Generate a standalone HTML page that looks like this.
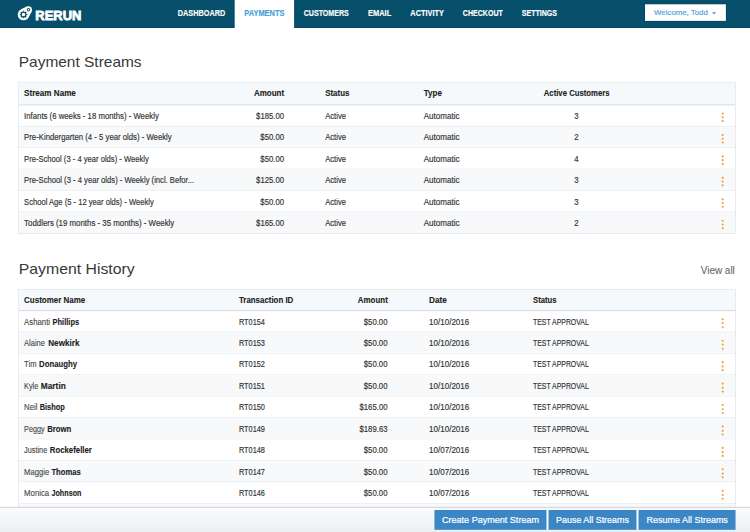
<!DOCTYPE html>
<html>
<head>
<meta charset="utf-8">
<title>Rerun - Payments</title>
<style>
html,body{margin:0;padding:0;width:750px;height:532px;overflow:hidden;background:#fff;}
body{font-family:"Liberation Sans",sans-serif;color:#333;}
#page{position:absolute;left:0;top:0;width:1400px;height:994px;transform:scale(0.535714);transform-origin:0 0;overflow:hidden;background:#fff;}
#page>*{position:absolute;}
.t{white-space:nowrap;color:#333;transform-origin:0 50%;-webkit-text-stroke:0.3px #333;}
.b{font-weight:bold;color:#222;-webkit-text-stroke:0.2px #222;}
#nav{left:0;top:0;width:1400px;background:#07506b;border-bottom:2px solid #04415f;box-sizing:border-box;}
.logo{left:26.13px;top:3.73px;width:44.8px;height:41.07px;}
.brand{color:#fff;-webkit-text-stroke:1.5px #fff;}
#tab{top:0;background:#fff;}
.te{top:0;background:#04456a;}
.nv{color:#fff;-webkit-text-stroke:0.3px #fff;}
.nv.on{color:#4a9fdc;-webkit-text-stroke:0.3px #4a9fdc;}
#user{background:#fff;box-shadow:0 0 0 1.5px #05445f;}
.usr{color:#4a9fdc;-webkit-text-stroke:0.3px #4a9fdc;}
#caret{width:0;height:0;border-left:4px solid transparent;border-right:4px solid transparent;border-top:4px solid #4a9fdc;}
.h{color:#383838;-webkit-text-stroke:0;}
.va{color:#6a6a72;-webkit-text-stroke:0.2px #6a6a72;}
.tbl{border:1px solid #dfe3e7;box-sizing:border-box;background:#e6e9ec;}
.hd{background:#f6f9fb;border-bottom:2px solid #d4d8dc;}
.rw{background:#fff;}
.rw.alt{background:#f7f9fb;}
.fn{color:#444;-webkit-text-stroke:0.2px #444;}
.dots{width:4px;}
.dots i{display:block;width:4px;height:4px;border-radius:50%;background:#f0a22e;margin-bottom:3.1px;}
#foot{left:0;width:1400px;border-top:2px solid #cfd5db;background:linear-gradient(#fafbfc,#eceff1);box-sizing:border-box;}
.btn{background:#3b86c4;}
.bt{color:#fff;-webkit-text-stroke:0.4px #fff;}
</style>
</head>
<body>
<div id="page">
<div id="nav" style="height:52.27px"></div>
<svg class="logo" viewBox="14 2 24 22">
<g fill="#fff"><path d="M28.76,17.04 L31.71,11.29 L26.96,6.40 L21.12,9.16 Z"/><circle cx="23.6" cy="14.4" r="5.8"/><circle cx="28.5" cy="9.65" r="3.6"/></g>
<g fill="#07506b"><circle cx="23.6" cy="14.4" r="2.8"/><rect x="22.90" y="10.65" width="1.4" height="7.5" transform="rotate(0 23.6 14.4)"/><rect x="22.90" y="10.65" width="1.4" height="7.5" transform="rotate(45 23.6 14.4)"/><rect x="22.90" y="10.65" width="1.4" height="7.5" transform="rotate(90 23.6 14.4)"/><rect x="22.90" y="10.65" width="1.4" height="7.5" transform="rotate(135 23.6 14.4)"/><circle cx="28.5" cy="9.65" r="1.7"/></g>
<g fill="#fff"><circle cx="23.6" cy="14.4" r="1.75"/><circle cx="28.5" cy="9.65" r="0.8"/></g>
</svg>
<span class="t b brand" style="left:66.08px;top:13.77px;font-size:24px;line-height:29px;transform:scaleX(1.008);">RERUN</span>
<div class="te" style="left:436.48px;width:113.13px;height:52.27px"></div>
<div id="tab" style="left:438.48px;width:110.13px;height:52.87px"></div>
<span class="t b nv" style="left:331.89px;top:13.59px;font-size:16.5px;line-height:20px;transform:scaleX(0.823);">DASHBOARD</span>
<span class="t b nv on" style="left:456.4px;top:13.59px;font-size:16.5px;line-height:20px;transform:scaleX(0.844);">PAYMENTS</span>
<span class="t b nv" style="left:567.47px;top:13.59px;font-size:16.5px;line-height:20px;transform:scaleX(0.799);">CUSTOMERS</span>
<span class="t b nv" style="left:687.31px;top:13.59px;font-size:16.5px;line-height:20px;transform:scaleX(0.844);">EMAIL</span>
<span class="t b nv" style="left:766.08px;top:13.59px;font-size:16.5px;line-height:20px;transform:scaleX(0.832);">ACTIVITY</span>
<span class="t b nv" style="left:864.08px;top:13.59px;font-size:16.5px;line-height:20px;transform:scaleX(0.797);">CHECKOUT</span>
<span class="t b nv" style="left:974.21px;top:13.59px;font-size:16.5px;line-height:20px;transform:scaleX(0.796);">SETTINGS</span>
<div id="user" style="left:1203.81px;top:7.84px;width:151.39px;height:30.89px"></div>
<span class="t usr" style="left:1220.8px;top:14.36px;font-size:15px;line-height:18px;transform:scaleX(0.975);">Welcome, Todd</span>
<i id="caret" style="left:1329.07px;top:22.77px"></i>
<span class="t h" style="left:35.09px;top:97.89px;font-size:29px;line-height:35px;transform:scaleX(0.995);">Payment Streams</span>
<span class="t h" style="left:35.09px;top:483.54px;font-size:29px;line-height:35px;transform:scaleX(1.017);">Payment History</span>
<span class="t va" style="left:1308.35px;top:492.82px;font-size:19px;line-height:23px;transform:scaleX(0.977);">View all</span>
<div class="tbl" style="left:33.97px;top:153.13px;width:1338.59px;height:283.02px"></div>
<div class="hd" style="left:34.97px;top:154.13px;width:1336.59px;height:40.5px"></div>
<div class="rw" style="left:34.97px;top:196.63px;width:1336.59px;height:38px"></div>
<div class="rw alt" style="left:34.97px;top:235.63px;width:1336.59px;height:39px"></div>
<div class="rw" style="left:34.97px;top:275.63px;width:1336.59px;height:39px"></div>
<div class="rw alt" style="left:34.97px;top:315.63px;width:1336.59px;height:39px"></div>
<div class="rw" style="left:34.97px;top:355.64px;width:1336.59px;height:39px"></div>
<div class="rw alt" style="left:34.97px;top:395.64px;width:1336.59px;height:39px"></div>
<span class="t b" style="left:44.61px;top:164.9px;font-size:16px;line-height:19px;transform:scaleX(0.944);">Stream Name</span>
<span class="t b" style="left:473.95px;top:164.9px;font-size:16px;line-height:19px;transform:scaleX(0.933);">Amount</span>
<span class="t b" style="left:606.67px;top:164.9px;font-size:16px;line-height:19px;transform:scaleX(0.924);">Status</span>
<span class="t b" style="left:791.47px;top:164.9px;font-size:16px;line-height:19px;transform:scaleX(0.940);">Type</span>
<span class="t b" style="left:1015.09px;top:164.9px;font-size:16px;line-height:19px;transform:scaleX(0.903);">Active Customers</span>
<span class="t" style="left:44.61px;top:206.72px;font-size:16px;line-height:19px;transform:scaleX(0.907);">Infants (6 weeks - 18 months) - Weekly</span>
<span class="t" style="left:477.91px;top:206.72px;font-size:16px;line-height:19px;transform:scaleX(0.906);">$185.00</span>
<span class="t" style="left:606.67px;top:206.72px;font-size:16px;line-height:19px;transform:scaleX(0.891);">Active</span>
<span class="t" style="left:791.47px;top:206.72px;font-size:16px;line-height:19px;transform:scaleX(0.939);">Automatic</span>
<span class="t" style="left:1072.47px;top:206.72px;font-size:16px;line-height:19px;transform:scaleX(0.906);">3</span>
<span class="dots" style="left:1346.67px;top:210.05px"><i></i><i></i><i></i></span>
<span class="t" style="left:44.61px;top:246.72px;font-size:16px;line-height:19px;transform:scaleX(0.904);">Pre-Kindergarten (4 - 5 year olds) - Weekly</span>
<span class="t" style="left:485.97px;top:246.72px;font-size:16px;line-height:19px;transform:scaleX(0.906);">$50.00</span>
<span class="t" style="left:606.67px;top:246.72px;font-size:16px;line-height:19px;transform:scaleX(0.891);">Active</span>
<span class="t" style="left:791.47px;top:246.72px;font-size:16px;line-height:19px;transform:scaleX(0.939);">Automatic</span>
<span class="t" style="left:1072.47px;top:246.72px;font-size:16px;line-height:19px;transform:scaleX(0.906);">2</span>
<span class="dots" style="left:1346.67px;top:250.06px"><i></i><i></i><i></i></span>
<span class="t" style="left:44.61px;top:286.72px;font-size:16px;line-height:19px;transform:scaleX(0.888);">Pre-School (3 - 4 year olds) - Weekly</span>
<span class="t" style="left:485.97px;top:286.72px;font-size:16px;line-height:19px;transform:scaleX(0.906);">$50.00</span>
<span class="t" style="left:606.67px;top:286.72px;font-size:16px;line-height:19px;transform:scaleX(0.891);">Active</span>
<span class="t" style="left:791.47px;top:286.72px;font-size:16px;line-height:19px;transform:scaleX(0.939);">Automatic</span>
<span class="t" style="left:1072.47px;top:286.72px;font-size:16px;line-height:19px;transform:scaleX(0.906);">4</span>
<span class="dots" style="left:1346.67px;top:290.06px"><i></i><i></i><i></i></span>
<span class="t" style="left:44.61px;top:326.72px;font-size:16px;line-height:19px;transform:scaleX(0.893);">Pre-School (3 - 4 year olds) - Weekly (incl. Befor...</span>
<span class="t" style="left:477.91px;top:326.72px;font-size:16px;line-height:19px;transform:scaleX(0.906);">$125.00</span>
<span class="t" style="left:606.67px;top:326.72px;font-size:16px;line-height:19px;transform:scaleX(0.891);">Active</span>
<span class="t" style="left:791.47px;top:326.72px;font-size:16px;line-height:19px;transform:scaleX(0.939);">Automatic</span>
<span class="t" style="left:1072.47px;top:326.72px;font-size:16px;line-height:19px;transform:scaleX(0.906);">3</span>
<span class="dots" style="left:1346.67px;top:330.06px"><i></i><i></i><i></i></span>
<span class="t" style="left:44.61px;top:366.73px;font-size:16px;line-height:19px;transform:scaleX(0.887);">School Age (5 - 12 year olds) - Weekly</span>
<span class="t" style="left:485.97px;top:366.73px;font-size:16px;line-height:19px;transform:scaleX(0.906);">$50.00</span>
<span class="t" style="left:606.67px;top:366.73px;font-size:16px;line-height:19px;transform:scaleX(0.891);">Active</span>
<span class="t" style="left:791.47px;top:366.73px;font-size:16px;line-height:19px;transform:scaleX(0.939);">Automatic</span>
<span class="t" style="left:1072.47px;top:366.73px;font-size:16px;line-height:19px;transform:scaleX(0.906);">3</span>
<span class="dots" style="left:1346.67px;top:370.06px"><i></i><i></i><i></i></span>
<span class="t" style="left:44.61px;top:406.73px;font-size:16px;line-height:19px;transform:scaleX(0.917);">Toddlers (19 months - 35 months) - Weekly</span>
<span class="t" style="left:477.91px;top:406.73px;font-size:16px;line-height:19px;transform:scaleX(0.906);">$165.00</span>
<span class="t" style="left:606.67px;top:406.73px;font-size:16px;line-height:19px;transform:scaleX(0.891);">Active</span>
<span class="t" style="left:791.47px;top:406.73px;font-size:16px;line-height:19px;transform:scaleX(0.939);">Automatic</span>
<span class="t" style="left:1072.47px;top:406.73px;font-size:16px;line-height:19px;transform:scaleX(0.906);">2</span>
<span class="dots" style="left:1346.67px;top:410.07px"><i></i><i></i><i></i></span>
<div class="tbl" style="left:33.97px;top:539.53px;width:1338.59px;height:440.97px"></div>
<div class="hd" style="left:34.97px;top:540.53px;width:1336.59px;height:38.45px"></div>
<div class="rw" style="left:34.97px;top:580.97px;width:1336.59px;height:38px"></div>
<div class="rw alt" style="left:34.97px;top:619.98px;width:1336.59px;height:39px"></div>
<div class="rw" style="left:34.97px;top:659.98px;width:1336.59px;height:39px"></div>
<div class="rw alt" style="left:34.97px;top:699.98px;width:1336.59px;height:39px"></div>
<div class="rw" style="left:34.97px;top:739.98px;width:1336.59px;height:39px"></div>
<div class="rw alt" style="left:34.97px;top:779.99px;width:1336.59px;height:39px"></div>
<div class="rw" style="left:34.97px;top:819.99px;width:1336.59px;height:39px"></div>
<div class="rw alt" style="left:34.97px;top:859.99px;width:1336.59px;height:39px"></div>
<div class="rw" style="left:34.97px;top:899.99px;width:1336.59px;height:39px"></div>
<div class="rw alt" style="left:34.97px;top:940px;width:1336.59px;height:39px"></div>
<span class="t b" style="left:44.61px;top:550.18px;font-size:16px;line-height:19px;transform:scaleX(0.930);">Customer Name</span>
<span class="t b" style="left:446.32px;top:550.18px;font-size:16px;line-height:19px;transform:scaleX(0.921);">Transaction ID</span>
<span class="t b" style="left:667.71px;top:550.18px;font-size:16px;line-height:19px;transform:scaleX(0.924);">Amount</span>
<span class="t b" style="left:800.99px;top:550.18px;font-size:16px;line-height:19px;transform:scaleX(0.958);">Date</span>
<span class="t b" style="left:994.56px;top:550.18px;font-size:16px;line-height:19px;transform:scaleX(0.897);">Status</span>
<span class="t fn" style="left:44.61px;top:590.69px;font-size:16px;line-height:19px;transform:scaleX(0.906);">Ashanti</span>
<span class="t b" style="left:98.37px;top:590.69px;font-size:16px;line-height:19px;transform:scaleX(0.873);">Phillips</span>
<span class="t" style="left:446.32px;top:590.69px;font-size:16px;line-height:19px;transform:scaleX(0.857);">RT0154</span>
<span class="t" style="left:679.17px;top:590.69px;font-size:16px;line-height:19px;transform:scaleX(0.906);">$50.00</span>
<span class="t" style="left:800.99px;top:590.69px;font-size:16px;line-height:19px;transform:scaleX(0.935);">10/10/2016</span>
<span class="t" style="left:994.56px;top:590.69px;font-size:16px;line-height:19px;transform:scaleX(0.805);">TEST APPROVAL</span>
<span class="dots" style="left:1346.67px;top:594.4px"><i></i><i></i><i></i></span>
<span class="t fn" style="left:44.61px;top:630.69px;font-size:16px;line-height:19px;transform:scaleX(0.873);">Alaine</span>
<span class="t b" style="left:89.6px;top:630.69px;font-size:16px;line-height:19px;transform:scaleX(0.952);">Newkirk</span>
<span class="t" style="left:446.32px;top:630.69px;font-size:16px;line-height:19px;transform:scaleX(0.857);">RT0153</span>
<span class="t" style="left:679.17px;top:630.69px;font-size:16px;line-height:19px;transform:scaleX(0.906);">$50.00</span>
<span class="t" style="left:800.99px;top:630.69px;font-size:16px;line-height:19px;transform:scaleX(0.935);">10/10/2016</span>
<span class="t" style="left:994.56px;top:630.69px;font-size:16px;line-height:19px;transform:scaleX(0.805);">TEST APPROVAL</span>
<span class="dots" style="left:1346.67px;top:634.4px"><i></i><i></i><i></i></span>
<span class="t fn" style="left:44.61px;top:670.69px;font-size:16px;line-height:19px;transform:scaleX(0.888);">Tim</span>
<span class="t b" style="left:73.17px;top:670.69px;font-size:16px;line-height:19px;transform:scaleX(0.907);">Donaughy</span>
<span class="t" style="left:446.32px;top:670.69px;font-size:16px;line-height:19px;transform:scaleX(0.857);">RT0152</span>
<span class="t" style="left:679.17px;top:670.69px;font-size:16px;line-height:19px;transform:scaleX(0.906);">$50.00</span>
<span class="t" style="left:800.99px;top:670.69px;font-size:16px;line-height:19px;transform:scaleX(0.935);">10/10/2016</span>
<span class="t" style="left:994.56px;top:670.69px;font-size:16px;line-height:19px;transform:scaleX(0.805);">TEST APPROVAL</span>
<span class="dots" style="left:1346.67px;top:674.41px"><i></i><i></i><i></i></span>
<span class="t fn" style="left:44.61px;top:710.7px;font-size:16px;line-height:19px;transform:scaleX(0.846);">Kyle</span>
<span class="t b" style="left:76.16px;top:710.7px;font-size:16px;line-height:19px;transform:scaleX(0.976);">Martin</span>
<span class="t" style="left:446.32px;top:710.7px;font-size:16px;line-height:19px;transform:scaleX(0.857);">RT0151</span>
<span class="t" style="left:679.17px;top:710.7px;font-size:16px;line-height:19px;transform:scaleX(0.906);">$50.00</span>
<span class="t" style="left:800.99px;top:710.7px;font-size:16px;line-height:19px;transform:scaleX(0.935);">10/10/2016</span>
<span class="t" style="left:994.56px;top:710.7px;font-size:16px;line-height:19px;transform:scaleX(0.805);">TEST APPROVAL</span>
<span class="dots" style="left:1346.67px;top:714.41px"><i></i><i></i><i></i></span>
<span class="t fn" style="left:44.61px;top:750.7px;font-size:16px;line-height:19px;transform:scaleX(0.901);">Neil</span>
<span class="t b" style="left:74.11px;top:750.7px;font-size:16px;line-height:19px;transform:scaleX(0.868);">Bishop</span>
<span class="t" style="left:446.32px;top:750.7px;font-size:16px;line-height:19px;transform:scaleX(0.857);">RT0150</span>
<span class="t" style="left:671.11px;top:750.7px;font-size:16px;line-height:19px;transform:scaleX(0.906);">$165.00</span>
<span class="t" style="left:800.99px;top:750.7px;font-size:16px;line-height:19px;transform:scaleX(0.935);">10/10/2016</span>
<span class="t" style="left:994.56px;top:750.7px;font-size:16px;line-height:19px;transform:scaleX(0.805);">TEST APPROVAL</span>
<span class="dots" style="left:1346.67px;top:754.41px"><i></i><i></i><i></i></span>
<span class="t fn" style="left:44.61px;top:790.7px;font-size:16px;line-height:19px;transform:scaleX(0.848);">Peggy</span>
<span class="t b" style="left:87.55px;top:790.7px;font-size:16px;line-height:19px;transform:scaleX(0.908);">Brown</span>
<span class="t" style="left:446.32px;top:790.7px;font-size:16px;line-height:19px;transform:scaleX(0.857);">RT0149</span>
<span class="t" style="left:671.11px;top:790.7px;font-size:16px;line-height:19px;transform:scaleX(0.906);">$189.63</span>
<span class="t" style="left:800.99px;top:790.7px;font-size:16px;line-height:19px;transform:scaleX(0.935);">10/10/2016</span>
<span class="t" style="left:994.56px;top:790.7px;font-size:16px;line-height:19px;transform:scaleX(0.805);">TEST APPROVAL</span>
<span class="dots" style="left:1346.67px;top:794.41px"><i></i><i></i><i></i></span>
<span class="t fn" style="left:44.61px;top:830.71px;font-size:16px;line-height:19px;transform:scaleX(0.851);">Justine</span>
<span class="t b" style="left:92.59px;top:830.71px;font-size:16px;line-height:19px;transform:scaleX(0.909);">Rockefeller</span>
<span class="t" style="left:446.32px;top:830.71px;font-size:16px;line-height:19px;transform:scaleX(0.857);">RT0148</span>
<span class="t" style="left:679.17px;top:830.71px;font-size:16px;line-height:19px;transform:scaleX(0.906);">$50.00</span>
<span class="t" style="left:800.99px;top:830.71px;font-size:16px;line-height:19px;transform:scaleX(0.935);">10/07/2016</span>
<span class="t" style="left:994.56px;top:830.71px;font-size:16px;line-height:19px;transform:scaleX(0.805);">TEST APPROVAL</span>
<span class="dots" style="left:1346.67px;top:834.42px"><i></i><i></i><i></i></span>
<span class="t fn" style="left:44.61px;top:870.71px;font-size:16px;line-height:19px;transform:scaleX(0.893);">Maggie</span>
<span class="t b" style="left:96.13px;top:870.71px;font-size:16px;line-height:19px;transform:scaleX(0.889);">Thomas</span>
<span class="t" style="left:446.32px;top:870.71px;font-size:16px;line-height:19px;transform:scaleX(0.857);">RT0147</span>
<span class="t" style="left:679.17px;top:870.71px;font-size:16px;line-height:19px;transform:scaleX(0.906);">$50.00</span>
<span class="t" style="left:800.99px;top:870.71px;font-size:16px;line-height:19px;transform:scaleX(0.935);">10/07/2016</span>
<span class="t" style="left:994.56px;top:870.71px;font-size:16px;line-height:19px;transform:scaleX(0.805);">TEST APPROVAL</span>
<span class="dots" style="left:1346.67px;top:874.42px"><i></i><i></i><i></i></span>
<span class="t fn" style="left:44.61px;top:910.71px;font-size:16px;line-height:19px;transform:scaleX(0.908);">Monica</span>
<span class="t b" style="left:96.13px;top:910.71px;font-size:16px;line-height:19px;transform:scaleX(0.840);">Johnson</span>
<span class="t" style="left:446.32px;top:910.71px;font-size:16px;line-height:19px;transform:scaleX(0.857);">RT0146</span>
<span class="t" style="left:679.17px;top:910.71px;font-size:16px;line-height:19px;transform:scaleX(0.906);">$50.00</span>
<span class="t" style="left:800.99px;top:910.71px;font-size:16px;line-height:19px;transform:scaleX(0.935);">10/07/2016</span>
<span class="t" style="left:994.56px;top:910.71px;font-size:16px;line-height:19px;transform:scaleX(0.805);">TEST APPROVAL</span>
<span class="dots" style="left:1346.67px;top:914.42px"><i></i><i></i><i></i></span>
<span class="t fn" style="left:44.61px;top:950.71px;font-size:16px;line-height:19px;transform:scaleX(0.917);">Laura</span>
<span class="t b" style="left:86.8px;top:950.71px;font-size:16px;line-height:19px;transform:scaleX(0.897);">Stevens</span>
<span class="t" style="left:446.32px;top:950.71px;font-size:16px;line-height:19px;transform:scaleX(0.857);">RT0145</span>
<span class="t" style="left:679.17px;top:950.71px;font-size:16px;line-height:19px;transform:scaleX(0.906);">$50.00</span>
<span class="t" style="left:800.99px;top:950.71px;font-size:16px;line-height:19px;transform:scaleX(0.935);">10/07/2016</span>
<span class="t" style="left:994.56px;top:950.71px;font-size:16px;line-height:19px;transform:scaleX(0.805);">TEST APPROVAL</span>
<span class="dots" style="left:1346.67px;top:954.42px"><i></i><i></i><i></i></span>
<div id="foot" style="top:945.65px;height:48.35px"></div>
<div class="btn" style="left:811.44px;top:951.81px;width:208.32px;height:36.77px"></div>
<span class="t bt" style="left:825.07px;top:959.59px;font-size:18px;line-height:22px;transform:scaleX(0.938);">Create Payment Stream</span>
<div class="btn" style="left:1024.05px;top:951.81px;width:163.89px;height:36.77px"></div>
<span class="t bt" style="left:1038.24px;top:959.59px;font-size:18px;line-height:22px;transform:scaleX(0.924);">Pause All Streams</span>
<div class="btn" style="left:1192.05px;top:951.81px;width:180.69px;height:36.77px"></div>
<span class="t bt" style="left:1206.61px;top:959.59px;font-size:18px;line-height:22px;transform:scaleX(0.930);">Resume All Streams</span>
</div>
</body>
</html>
